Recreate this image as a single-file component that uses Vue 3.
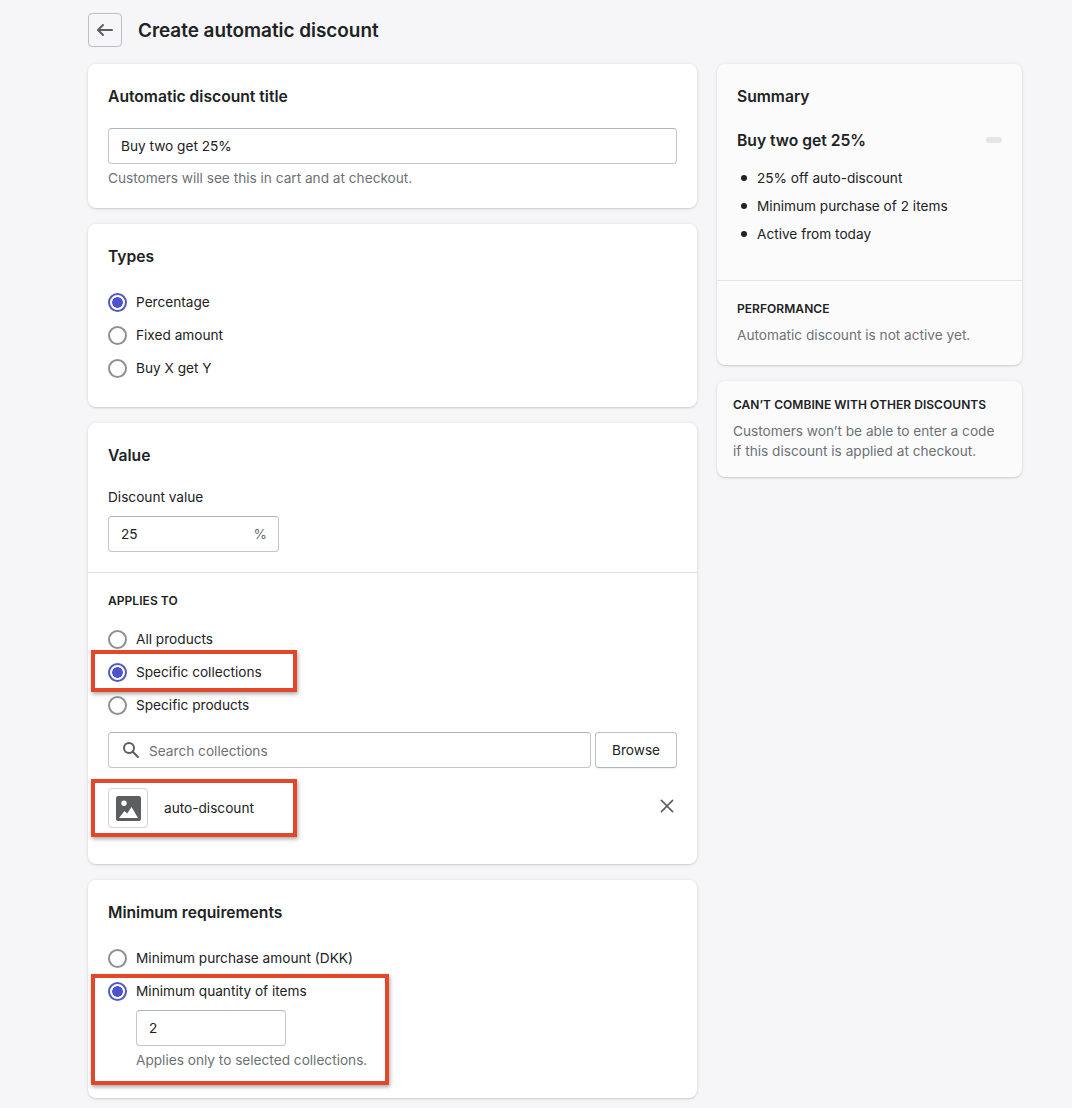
<template>
  <div class="page">
    <header class="top">
      <button class="back" aria-label="Back">
        <svg viewBox="0 0 20 20" width="20" height="20"><path d="M17 9H5.414l3.293-3.293a.999.999 0 1 0-1.414-1.414l-5 5a.999.999 0 0 0 0 1.414l5 5a.997.997 0 0 0 1.414 0 .999.999 0 0 0 0-1.414L5.414 11H17a1 1 0 1 0 0-2z" /></svg>
      </button>
      <h1>Create automatic discount</h1>
    </header>

    <div class="columns">
      <main class="main">
        <section class="card">
          <h2>Automatic discount title</h2>
          <input class="field title-field" value="Buy two get 25%" readonly />
          <p class="help">Customers will see this in cart and at checkout.</p>
        </section>

        <section class="card types">
          <h2>Types</h2>
          <div class="radios">
            <label v-for="t in types" :key="t" class="radio">
              <span class="dot" :class="{ on: t === 'Percentage' }"></span>{{ t }}
            </label>
          </div>
        </section>

        <section class="card value">
          <div class="value-top">
            <h2>Value</h2>
            <div class="label">Discount value</div>
            <div class="field percent"><span>25</span><span class="muted">%</span></div>
          </div>
          <div class="applies">
            <h3>Applies to</h3>
            <div class="radios">
              <label v-for="a in applies" :key="a" class="radio">
                <span class="dot" :class="{ on: a === 'Specific collections' }"></span>{{ a }}
                <i v-if="a === 'Specific collections'" class="callout c1"></i>
              </label>
            </div>
            <div class="search-row">
              <div class="field search">
                <svg viewBox="0 0 20 20" width="20" height="20"><path d="M8 12a4 4 0 1 1 0-8 4 4 0 0 1 0 8zm9.707 4.293-4.82-4.82A5.968 5.968 0 0 0 14 8 6 6 0 0 0 2 8a6 6 0 0 0 6 6c1.296 0 2.49-.416 3.473-1.113l4.82 4.82a.997.997 0 0 0 1.414 0 .999.999 0 0 0 0-1.414z" /></svg>
                <span class="muted">Search collections</span>
              </div>
              <button class="browse">Browse</button>
            </div>
            <div class="picked">
              <div class="thumb">
                <svg viewBox="0 0 25 25" width="25" height="25"><path fill-rule="evenodd" d="M2 0h21a2 2 0 0 1 2 2v21a2 2 0 0 1-2 2H2a2 2 0 0 1-2-2V2a2 2 0 0 1 2-2zm6 10a2.700 2.700 0 1 0 0-5.400 2.700 2.700 0 0 0 0 5.400zm-5 12h19l-6.500-11-4.300 6.500-2.700-2.500z" /></svg>
              </div>
              <span>auto-discount</span>
              <svg class="remove" viewBox="0 0 20 20" width="16" height="16"><path d="m11.414 10 6.293-6.293a1 1 0 1 0-1.414-1.414L10 8.586 3.707 2.293a1 1 0 0 0-1.414 1.414L8.586 10l-6.293 6.293a1 1 0 1 0 1.414 1.414L10 11.414l6.293 6.293a.997.997 0 0 0 1.414 0 1 1 0 0 0 0-1.414L11.414 10z" /></svg>
              <i class="callout c2"></i>
            </div>
          </div>
        </section>

        <section class="card minimum">
          <h2>Minimum requirements</h2>
          <div class="radios">
            <label class="radio"><span class="dot"></span>Minimum purchase amount (DKK)</label>
            <div class="qty">
              <label class="radio"><span class="dot on"></span>Minimum quantity of items</label>
              <div class="qty-body">
                <div class="field qty-input">2</div>
                <p class="help">Applies only to selected collections.</p>
              </div>
              <i class="callout c3"></i>
            </div>
          </div>
        </section>
      </main>

      <aside class="side">
        <section class="card soft">
          <div class="summary">
            <h2>Summary</h2>
            <div class="summary-name">
              <strong>Buy two get 25%</strong>
              <span class="badge"></span>
            </div>
            <ul>
              <li v-for="s in summary" :key="s">{{ s }}</li>
            </ul>
          </div>
          <div class="performance">
            <h3>Performance</h3>
            <p class="help">Automatic discount is not active yet.</p>
          </div>
        </section>
        <section class="card soft combine">
          <h3>Can’t combine with other discounts</h3>
          <p class="help">Customers won’t be able to enter a code if this discount is applied at checkout.</p>
        </section>
      </aside>
    </div>
  </div>
</template>

<script setup>
const types = ["Percentage", "Fixed amount", "Buy X get Y"];
const applies = ["All products", "Specific collections", "Specific products"];
const summary = [
  "25% off auto-discount",
  "Minimum purchase of 2 items",
  "Active from today",
];
</script>

<style>
html,
body {
  margin: 0;
  background: #f6f6f8;
}
</style>

<style scoped>
.page {
  height: 1108px;
  overflow: hidden;
  box-sizing: border-box;
  padding: 13px 50px 0 88px;
  background: #f6f6f8;
  color: #202223;
  font-family: Inter, "Liberation Sans", sans-serif;
  font-size: 13.65px;
  line-height: 20px;
}
h1,
h2,
h3,
p,
ul {
  margin: 0;
  padding: 0;
}
.top {
  display: flex;
  align-items: center;
  gap: 16px;
  height: 34px;
}
.top h1 {
  font-size: 18.9px;
  line-height: 28px;
  font-weight: 600;
  padding-top: 2px;
}
.back {
  width: 34px;
  height: 34px;
  padding: 0;
  display: flex;
  align-items: center;
  justify-content: center;
  background: #f6f6f8;
  border: 1px solid #babfc3;
  border-radius: 4px;
}
.back svg {
  fill: #5c5f62;
}
.columns {
  display: flex;
  gap: 20px;
  margin-top: 17px;
  align-items: flex-start;
}
.main {
  width: 609px;
  display: flex;
  flex-direction: column;
  gap: 16px;
}
.side {
  width: 305px;
  display: flex;
  flex-direction: column;
  gap: 16px;
}
.card {
  background: #fff;
  border-radius: 8px;
  padding: 20px;
  box-shadow: 0 0 5px rgba(23, 24, 24, 0.05), 0 1px 2px rgba(0, 0, 0, 0.15);
}
.card h2 {
  box-sizing: border-box;
  height: 24px;
  padding-top: 1px;
  font-size: 15.65px;
  line-height: 24px;
  font-weight: 600;
}
h3 {
  font-size: 12px;
  line-height: 20px;
  font-weight: 600;
  letter-spacing: 0.05px;
  text-transform: uppercase;
}
.field {
  box-sizing: border-box;
  height: 36px;
  display: flex;
  align-items: center;
  padding: 0 12px;
  background: #fff;
  border: 1px solid #c4c6c8;
  border-top-color: #aeb4b9;
  border-radius: 4px;
  color: #202223;
  font: inherit;
  outline: none;
}
.title-field {
  width: 100%;
  margin-top: 20px;
}
.help {
  color: #6d7175;
}
.card > .help {
  margin-top: 4px;
}
.radios {
  margin-top: 18px;
  display: flex;
  flex-direction: column;
  gap: 1px;
}
.radio {
  position: relative;
  height: 32px;
  display: flex;
  align-items: center;
  gap: 9px;
}
.dot {
  box-sizing: border-box;
  width: 19px;
  height: 19px;
  border: 2px solid #8c9196;
  border-radius: 50%;
  background: #fff;
}
.dot.on {
  border-color: #5458c4;
  background: radial-gradient(circle, #4d52d0 0 5px, #fff 5.6px);
}
.types {
  padding-bottom: 23px;
}
.value {
  padding: 0;
}
.value-top {
  padding: 20px 20px 20px;
  border-bottom: 1px solid #e1e3e5;
}
.label {
  margin-top: 20px;
}
.percent {
  margin-top: 9px;
  width: 171px;
  padding-right: 11px;
  justify-content: space-between;
}
.muted {
  color: #6d7175;
}
.applies {
  padding: 18px 20px 36px;
}
.applies .radios {
  margin-top: 12px;
}
.search-row {
  display: flex;
  gap: 4px;
  margin-top: 11px;
}
.search {
  flex: 1;
  gap: 8px;
}
.search .muted {
  padding-top: 2px;
}
.search svg {
  fill: #5c5f62;
}
.browse {
  box-sizing: border-box;
  width: 82px;
  height: 36px;
  padding: 0;
  background: #fff;
  border: 1px solid #babfc3;
  border-bottom-color: #aeb4b9;
  border-radius: 4px;
  box-shadow: 0 1px 0 rgba(0, 0, 0, 0.05);
  color: #202223;
  font: inherit;
  font-weight: 400;
}
.picked {
  position: relative;
  display: flex;
  align-items: center;
  gap: 16px;
  margin-top: 20px;
  height: 40px;
}
.thumb {
  box-sizing: border-box;
  width: 40px;
  height: 40px;
  display: flex;
  align-items: center;
  justify-content: center;
  border: 1px solid #d2d5d8;
  border-radius: 4px;
}
.thumb svg {
  fill: #5c5f62;
}
.remove {
  position: absolute;
  right: 2px;
  top: 10px;
  fill: #5c5f62;
}
.minimum {
  padding-bottom: 28px;
}
.qty {
  position: relative;
}
.qty-body {
  padding-left: 28px;
  margin-top: 3px;
}
.qty-input {
  width: 150px;
}
.qty-body .help {
  margin-top: 4px;
}
.callout {
  position: absolute;
  box-sizing: border-box;
  border: 4px solid #e2472a;
  box-shadow: 1px 2px 4px rgba(0, 0, 0, 0.35);
  pointer-events: none;
}
.c1 {
  left: -17px;
  top: -6px;
  width: 206px;
  height: 42px;
}
.c2 {
  left: -17px;
  top: -9px;
  width: 206px;
  height: 58px;
}
.c3 {
  left: -17px;
  top: -1px;
  width: 298px;
  height: 111px;
}
.soft {
  background: #fbfbfc;
}
.side .card:first-child {
  padding: 0;
}
.summary {
  padding: 20px 20px 36px;
  border-bottom: 1px solid #e1e3e5;
}
.summary-name {
  display: flex;
  align-items: center;
  justify-content: space-between;
  margin-top: 20px;
  height: 24px;
  font-size: 15.65px;
  line-height: 24px;
}
.summary-name strong {
  font-weight: 600;
  padding-top: 2px;
}
.badge {
  width: 16px;
  height: 6px;
  border-radius: 3px;
  background: #e4e5e7;
}
.summary ul {
  list-style: none;
  margin-top: 16px;
  display: flex;
  flex-direction: column;
  gap: 8px;
}
.summary li {
  position: relative;
  padding-left: 20px;
}
.summary li::before {
  content: "";
  position: absolute;
  left: 4px;
  top: 7px;
  width: 6px;
  height: 6px;
  border-radius: 50%;
  background: #202223;
}
.performance {
  padding: 18px 20px 20px;
}
.performance .help {
  margin-top: 6px;
}
.combine {
  padding: 14px 16px 16px;
}
.combine .help {
  margin-top: 6px;
}
</style>
